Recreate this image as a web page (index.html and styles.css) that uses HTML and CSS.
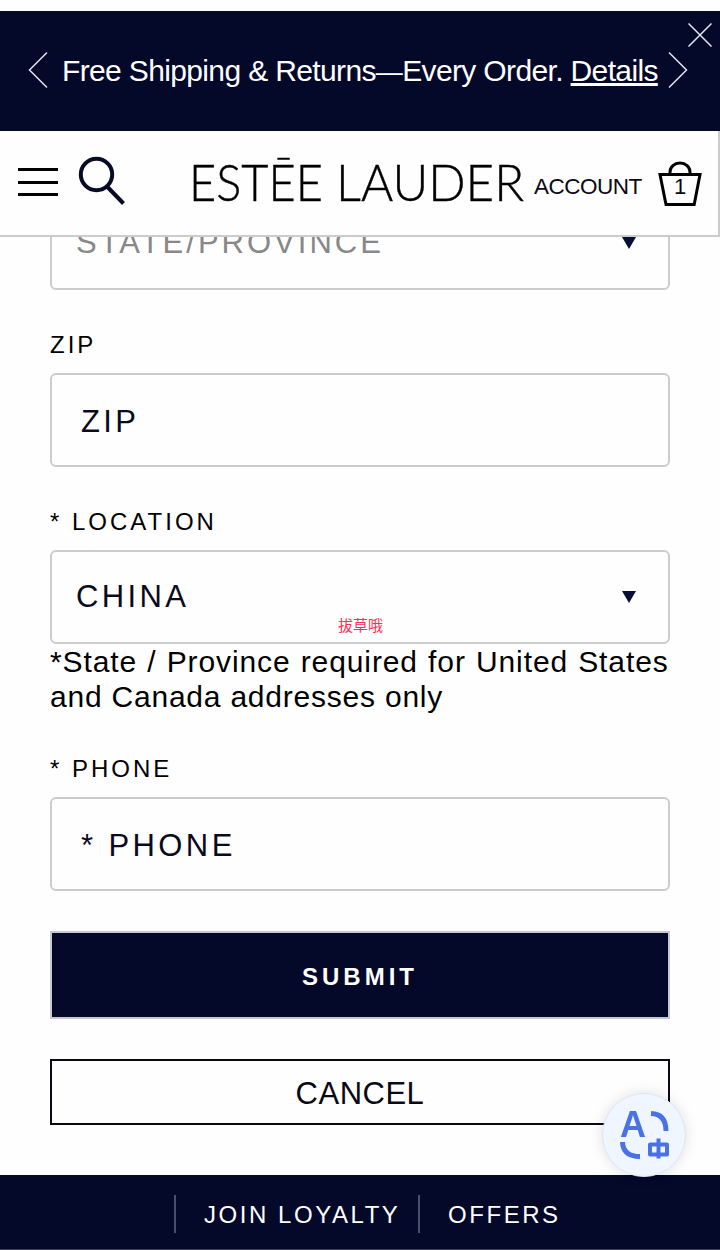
FILE: index.html
```html
<!DOCTYPE html>
<html lang="en">
<head>
    <meta charset="UTF-8">
    <meta name="viewport" content="width=device-width, initial-scale=1.0">
    <title>Estee Lauder</title>
    <link rel="stylesheet" href="styles.css">
</head>
<body>

    <!-- Offer banner -->
    <div class="banner">
        <svg class="arrow" width="20" height="38" viewBox="0 0 20 38"><path d="M19 1.5L1.5 19L19 36.5"/></svg>
        <p class="banner-text">Free Shipping &amp; Returns<span class="dash">—</span>Every Order. <a href="#">Details</a></p>
        <svg class="arrow" width="20" height="38" viewBox="0 0 20 38"><path d="M1 1.5L18.5 19L1 36.5"/></svg>
        <svg class="close" width="24" height="24" viewBox="0 0 24 24"><path d="M.5 .5L23.5 23.5M23.5 .5L.5 23.5"/></svg>
    </div>

    <!-- Header -->
    <header class="header">
        <div class="menu"><span></span><span></span><span></span></div>
        <svg class="search" width="48" height="50" viewBox="0 0 48 50"><circle cx="18.5" cy="18.5" r="15.7"/><path d="M29 30.5L45.5 47.5"/></svg>
        <svg class="logo" width="344" height="76" viewBox="0 0 344 76">
            <text x="0" y="57" textLength="134" lengthAdjust="spacingAndGlyphs">ESTĒE</text>
            <text x="147" y="57" textLength="188" lengthAdjust="spacingAndGlyphs">LAUDER</text>
        </svg>
        <a class="account" href="#">ACCOUNT</a>
        <div class="bag">
            <svg width="44" height="46" viewBox="0 0 44 46"><path d="M2 13.5H42L36.2 43.5H8Z"/><path d="M12 13V11A10 9 0 0 1 32 11V13"/></svg>
            <span class="count">1</span>
        </div>
    </header>

    <!-- Address form -->
    <form class="form">
        <div class="select-box">
            <select class="field select empty"><option>STATE/PROVINCE</option></select>
            <span class="caret"></span>
        </div>

        <label class="label">ZIP</label>
        <input class="field" type="text" placeholder="ZIP">

        <label class="label">* LOCATION</label>
        <div class="select-box">
            <select class="field select"><option>CHINA</option></select>
            <span class="caret"></span>
            <span class="mark">拔草哦</span>
        </div>
        <p class="note">*State / Province required for United States and Canada addresses only</p>

        <label class="label">* PHONE</label>
        <input class="field" type="text" placeholder="* PHONE">

        <button class="submit" type="button">SUBMIT</button>
        <button class="cancel" type="button">CANCEL</button>
    </form>

    <!-- Bottom bar -->
    <footer class="footer">
        <a href="#">JOIN LOYALTY</a>
        <a href="#">OFFERS</a>
    </footer>

    <!-- Floating translate button -->
    <div class="translate">
        <svg width="84" height="84" viewBox="0 0 84 84">
            <text class="letter" x="18" y="44" textLength="26" lengthAdjust="spacingAndGlyphs">A</text>
            <path d="M49 20.5Q64 21 64 38"/>
            <path d="M20.500 49Q21 63.500 38 63.500"/>
            <path class="zhong" d="M48 51.500H65V61.500H48ZM56.500 45.500V65.500"/>
        </svg>
    </div>

</body>
</html>
```
FILE: styles.css
```css
* {
    box-sizing: border-box;
}
body {
    margin: 0;
    padding-top: 11px;
    height: 1250px;
    overflow: hidden;
    font-family: "Liberation Sans", Arial, sans-serif;
    background-color: #fefefe;
    color: #0a0a14;
}
p {
    margin: 0;
}
svg {
    fill: none;
    flex: none;
}
a {
    color: inherit;
    text-decoration: none;
}
/* Banner */
.banner {
    position: relative;
    height: 120px;
    padding: 0 32px 4px 28px;
    display: flex;
    align-items: center;
    background-color: #040829;
    color: #fff;
}
.banner-text {
    width: 596px;
    margin: 4px 10px 0 14px;
    font-size: 30px;
    letter-spacing: -0.64px;
    white-space: nowrap;
}
.dash {
    font-size: 27px;
}
.banner-text a {
    text-decoration: underline;
    text-decoration-thickness: 3px;
    text-underline-offset: 2px;
}
.arrow, .close {
    stroke: #e4e6f0;
    stroke-width: 1.5;
}
.arrow {
    margin-bottom: -2px;
}
.close {
    position: absolute;
    top: 12px;
    right: 8px;
}
/* Header */
.header {
    position: relative;
    z-index: 1;
    height: 106px;
    padding-left: 18px;
    display: flex;
    align-items: flex-start;
    background-color: #fefefe;
    border-right: 2px solid #ccc;
    border-bottom: 2px solid #ccc;
}
.menu {
    width: 40px;
    margin-top: 37px;
    display: flex;
    flex-direction: column;
    gap: 9.5px;
}
.menu span {
    height: 3px;
    background-color: #000;
}
.search {
    margin: 25px 0 0 20px;
    stroke: #070b25;
    stroke-width: 4;
}
.logo {
    margin: 13px 0 0 63px;
}
.logo text {
    font-family: Lato, sans-serif;
    font-size: 52px;
    font-weight: 300;
    fill: #000;
    stroke: #000;
    stroke-width: 0.4;
}
.account {
    width: 108px;
    margin: 43px 0 0 1px;
    font-size: 22.5px;
    letter-spacing: -0.5px;
}
.bag {
    position: relative;
    margin: 30px 0 0 16px;
    stroke: #000;
    stroke-width: 3;
}
.count {
    position: absolute;
    top: 14px;
    left: 0;
    width: 44px;
    text-align: center;
    font-size: 22px;
    line-height: 24px;
}
/* Form */
.form {
    display: flex;
    flex-direction: column;
    height: 979px;
    margin-top: -41px;
    padding: 0 50px;
}
.label {
    margin-top: 41px;
    height: 42px;
    line-height: 28px;
    font-size: 24px;
    letter-spacing: 3px;
    color: #000;
}
.field {
    display: block;
    width: 100%;
    height: 94px;
    flex: none;
    padding: 4px 29px 0;
    font-family: inherit;
    font-size: 31px;
    letter-spacing: 3.4px;
    color: #0a0a1c;
    background-color: #fefefe;
    border: 2px solid #ccc;
    border-radius: 6px;
}
.field::placeholder {
    color: #0a0a1c;
    opacity: 1;
}
.select-box {
    position: relative;
}
.select {
    appearance: none;
    padding: 0 24px 2px;
}
.empty {
    color: #888;
    letter-spacing: 3px;
}
.caret {
    position: absolute;
    top: 41px;
    right: 34px;
    border: 7px solid transparent;
    border-top: 12px solid #080e36;
    border-bottom: 0;
}
.mark {
    position: absolute;
    top: 66px;
    left: 288px;
    font-family: "Noto Sans CJK SC", sans-serif;
    font-size: 15px;
    line-height: 18px;
    color: #ff2d55;
}
.note {
    font-size: 30px;
    line-height: 35px;
    letter-spacing: 0.78px;
    width: 630px;
    color: #000;
}
.note::first-line {
    letter-spacing: 0.9px;
    word-spacing: 0.9px;
}
.submit, .cancel {
    flex: none;
    font-family: inherit;
}
.submit {
    height: 88px;
    margin-top: 40px;
    padding: 3px 0 0;
    font-size: 24px;
    font-weight: bold;
    letter-spacing: 4px;
    color: #fff;
    background-color: #040829;
    border: 2px solid #c8c8d2;
}
.cancel {
    height: 66px;
    margin-top: 40px;
    padding: 4px 0 0;
    font-size: 31px;
    letter-spacing: 0.5px;
    color: #0a0a14;
    background-color: #fefefe;
    border: 2px solid #0a0a14;
}
/* Footer */
.footer {
    height: 75px;
    padding: 20px 0 0 174px;
    display: flex;
    background-color: #040829;
    border-bottom: 1px solid #3c405c;
}
.footer a {
    width: 244px;
    height: 38px;
    padding-left: 28px;
    border-left: 2px solid #4a4e6c;
    font-size: 24px;
    line-height: 40px;
    letter-spacing: 2.55px;
    color: #fff;
    white-space: nowrap;
}
/* Translate button */
.translate {
    position: fixed;
    z-index: 2;
    left: 602px;
    top: 1093px;
    width: 84px;
    height: 84px;
    border-radius: 50%;
    background-color: #f0f6ff;
    border: 1px solid #dfe6f2;
    box-shadow: 0 0 14px rgba(0, 0, 0, 0.12);
}
.translate svg {
    margin: -1px;
    stroke: #4a72e4;
    stroke-width: 5;
}
.translate .zhong {
    stroke-width: 4;
    stroke-linejoin: round;
}
.letter {
    font-size: 36px;
    font-weight: bold;
    fill: #4a72e4;
    stroke: none;
}
```
